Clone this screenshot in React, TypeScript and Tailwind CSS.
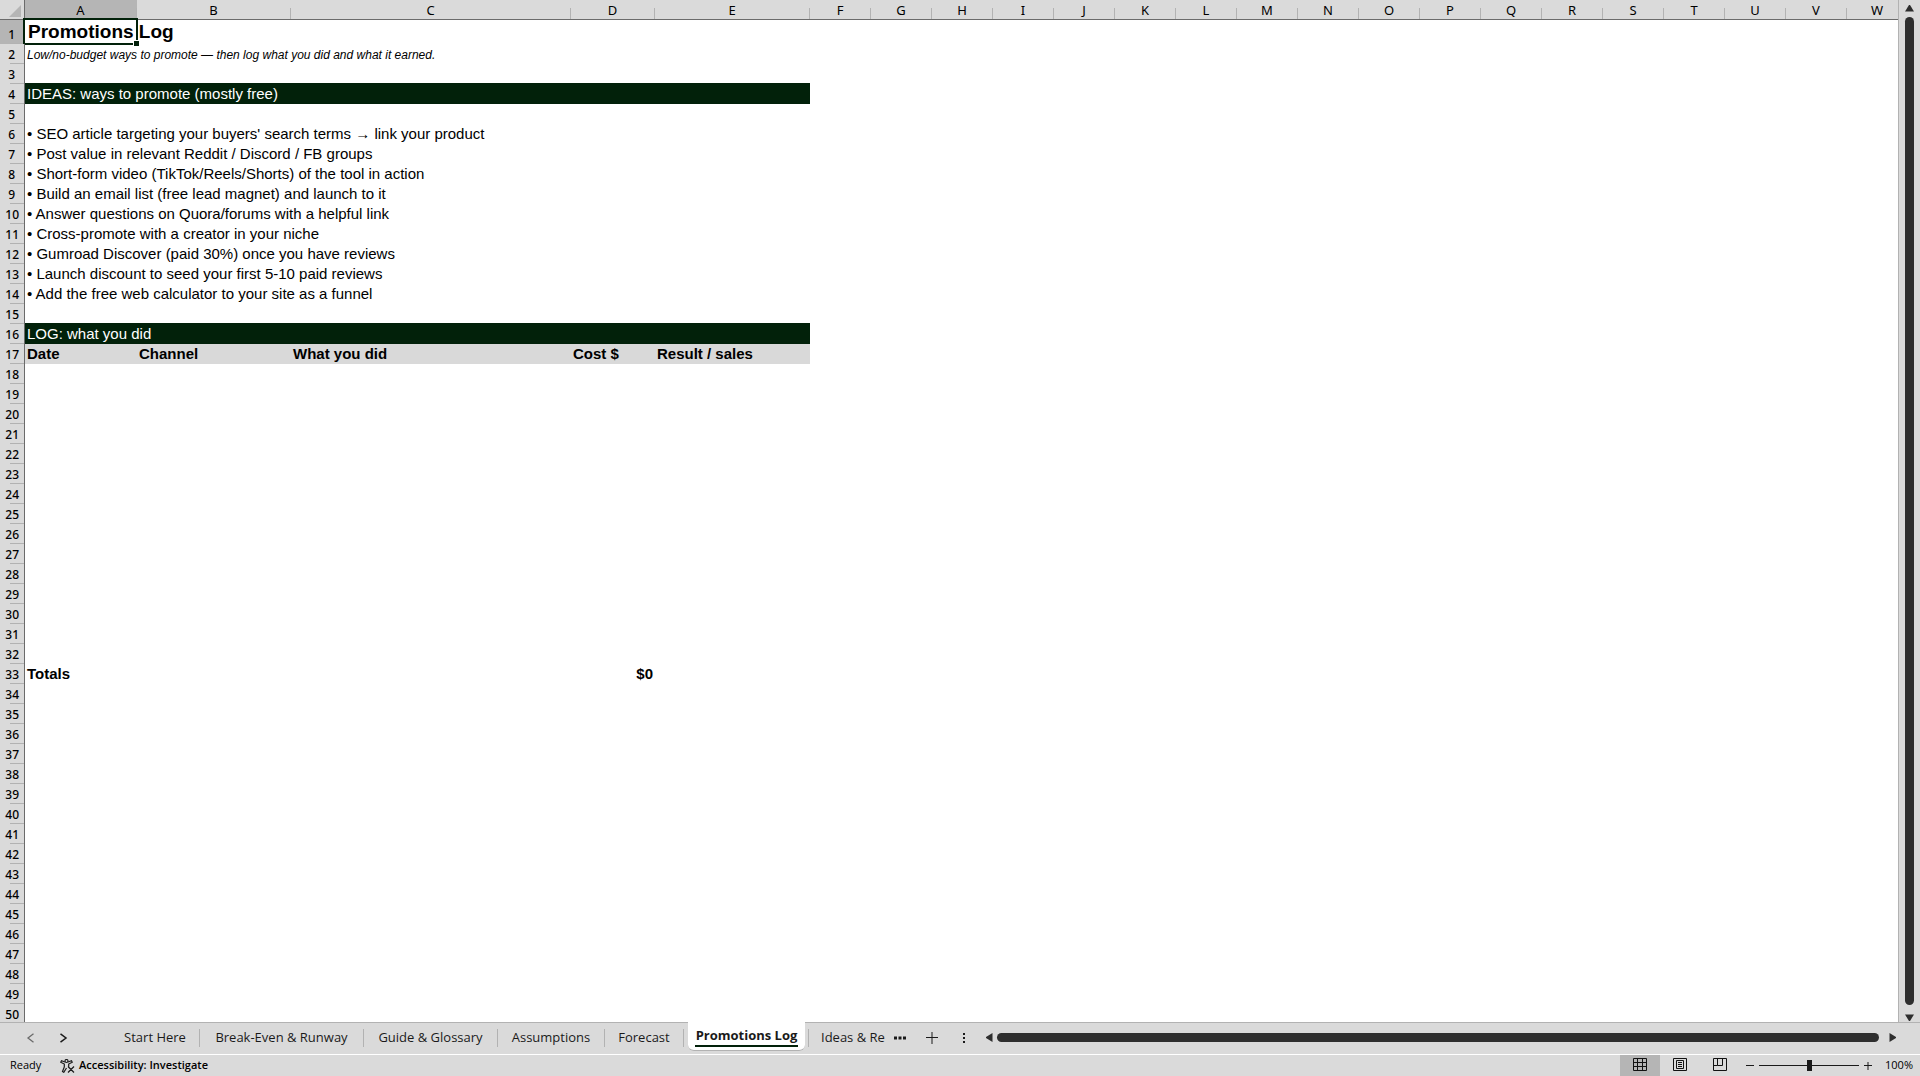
import type { ReactNode } from "react";

type Row = {
    cells?: Record<string, string>;
    band?: "dark" | "light";
    text?: string;
};

const COLUMNS = "ABCDEFGHIJKLMNOPQRSTUVW".split("");
const COLUMN_WIDTHS: Record<string, string> = {
    A: "w-[112px]",
    B: "w-[154px]",
    C: "w-[280px]",
    D: "w-[84px]",
    E: "w-[155px]",
};
const BAND_COLUMNS = ["A", "B", "C", "D", "E"];

const ROWS: Record<number, Row> = {
    2: {
        cells: { A: "Low/no-budget ways to promote — then log what you did and what it earned." },
        text: "text-[12px] leading-[22px] italic text-black",
    },
    4: {
        cells: { A: "IDEAS: ways to promote (mostly free)" },
        band: "dark",
        text: "text-[15px] leading-5 text-white",
    },
    6: { cells: { A: "• SEO article targeting your buyers' search terms → link your product" } },
    7: { cells: { A: "• Post value in relevant Reddit / Discord / FB groups" } },
    8: { cells: { A: "• Short-form video (TikTok/Reels/Shorts) of the tool in action" } },
    9: { cells: { A: "• Build an email list (free lead magnet) and launch to it" } },
    10: { cells: { A: "• Answer questions on Quora/forums with a helpful link" } },
    11: { cells: { A: "• Cross-promote with a creator in your niche" } },
    12: { cells: { A: "• Gumroad Discover (paid 30%) once you have reviews" } },
    13: { cells: { A: "• Launch discount to seed your first 5-10 paid reviews" } },
    14: { cells: { A: "• Add the free web calculator to your site as a funnel" } },
    16: {
        cells: { A: "LOG: what you did" },
        band: "dark",
        text: "text-[15px] leading-5 text-white",
    },
    17: {
        cells: { A: "Date", B: "Channel", C: "What you did", D: "Cost $", E: "Result / sales" },
        band: "light",
        text: "text-[15px] leading-5 font-bold",
    },
    33: { cells: { A: "Totals", D: "$0" }, text: "text-[15px] leading-5 font-bold" },
};

const TABS = [
    { name: "Start Here", width: "w-[89px]" },
    { name: "Break-Even & Runway", width: "w-[164px]" },
    { name: "Guide & Glossary", width: "w-[134px]" },
    { name: "Assumptions", width: "w-[107px]" },
    { name: "Forecast", width: "w-[79px]" },
];

function cellClass(row: number, col: string) {
    const inBand = BAND_COLUMNS.includes(col);
    const band = inBand ? ROWS[row]?.band : undefined;
    const bandBelow = inBand && ROWS[row + 1]?.band === "dark";
    let bg = "";
    if (band === "dark") bg = "bg-[#02210a]";
    if (band === "light") bg = "bg-[#d9d9d9]";
    let border = "";
    if (bandBelow) border = "border-b border-[#02210a]";
    const align = row === 33 && col === "D" ? "text-right" : "text-left";
    return `p-0 ${bg} ${border} ${align}`;
}

function Grid() {
    return (
        <table className="w-px table-fixed border-separate border-spacing-0 font-['Liberation_Sans',Arial,sans-serif] text-black">
            <colgroup>
                <col className="w-[25px]" />
                {COLUMNS.map((col) => (
                    <col key={col} className={COLUMN_WIDTHS[col] ?? "w-[61px]"} />
                ))}
            </colgroup>
            <thead className="font-['Noto_Sans',sans-serif] text-[13px] leading-4">
                <tr className="h-5">
                    <th className="border-b border-r border-[#6b6b6b] bg-[#dadada] p-0">
                        <svg className="ml-[9px] mt-[3px] h-3 w-3" viewBox="0 0 12 12" aria-label="Select all">
                            <path d="M12 0v12H0z" fill="#b5b5b5" />
                        </svg>
                    </th>
                    {COLUMNS.map((col) => (
                        <th
                            key={col}
                            className={`relative border-b border-[#6b6b6b] p-0 pr-px text-center font-normal ${
                                col === "A" ? "bg-[#b5b5b5]" : "bg-[#dadada]"
                            }`}
                        >
                            {col}
                            <span className="absolute right-0 bottom-0 h-[11px] w-px bg-[#b2b2b2]" />
                        </th>
                    ))}
                </tr>
            </thead>
            <tbody>
                {Array.from({ length: 50 }, (_, i) => i + 1).map((row) => (
                    <tr key={row} className={row === 1 ? "h-6" : "h-5"}>
                        <th
                            className={`relative border-r border-[#6b6b6b] p-0 pr-[5px] text-right align-bottom font-['Noto_Sans',sans-serif] text-[12px] leading-[18px] font-medium ${
                                row === 1 ? "bg-[#b5b5b5]" : "bg-[#dadada]"
                            }`}
                        >
                            <span className={row < 10 ? "pr-1" : ""}>{row}</span>
                            <span className="absolute right-0 bottom-0 h-px w-3.5 bg-[#b2b2b2]" />
                        </th>
                        {COLUMNS.map((col) => (
                            <td key={col} className={cellClass(row, col)}>
                                {row === 1 && col === "A" ? (
                                    <div className="relative h-6 pl-[3px] text-[19px] leading-6 font-bold whitespace-nowrap">
                                        Promotions Log
                                        <span className="absolute -top-0.5 -right-px -bottom-px -left-0.5 border-2 border-[#02210a]" />
                                        <span className="absolute -right-0.5 -bottom-0.5 h-[6px] w-[6px] border-t border-l border-white bg-[#02210a]" />
                                    </div>
                                ) : (
                                    ROWS[row]?.cells?.[col] && (
                                        <div
                                            className={`h-5 px-0.5 whitespace-nowrap ${
                                                ROWS[row].text ?? "text-[15px] leading-5"
                                            }`}
                                        >
                                            {ROWS[row].cells[col]}
                                        </div>
                                    )
                                )}
                            </td>
                        ))}
                    </tr>
                ))}
            </tbody>
        </table>
    );
}

function Arrow({ d, label }: { d: string; label: string }) {
    return (
        <button aria-label={label} className="shrink-0">
            <svg className="h-[9px] w-[9px]" viewBox="0 0 9 9" fill="#2e2e2e">
                <path d={d} />
            </svg>
        </button>
    );
}

function VerticalScrollbar() {
    return (
        <div className="flex w-[22px] shrink-0 flex-col items-center border-l border-[#b2b2b2] pt-1">
            <Arrow label="Scroll up" d="M4 1h1l4 6.500H0z" />
            <div className="mt-1 mb-2 w-[9px] flex-1 rounded-full bg-[#2e2e2e]" />
            <Arrow label="Scroll down" d="M4 8h1l4-6.500H0z" />
        </div>
    );
}

function SheetTabs() {
    return (
        <div className="flex h-8 shrink-0 items-center font-['Open_Sans','Noto_Sans',sans-serif] text-[13px] text-[#1a1a1a]">
            <div className="flex h-full w-[111px] items-center border-t border-[#b2b2b2] pb-0.5 pl-[26px]">
                <button aria-label="Previous sheet">
                    <svg className="h-2.5 w-2.5" viewBox="0 0 10 10" fill="none" stroke="#6b6b6b" strokeWidth="1.3">
                        <path d="M7.5.8 2 5l5.500 4.200" />
                    </svg>
                </button>
                <button aria-label="Next sheet" className="ml-[22px]">
                    <svg className="h-2.5 w-2.5" viewBox="0 0 10 10" fill="none" stroke="#1a1a1a" strokeWidth="1.5">
                        <path d="M2.500.8 8 5 2.500 9.200" />
                    </svg>
                </button>
            </div>
            {TABS.map((tab) => (
                <div key={tab.name} className={`flex h-full items-center border-t border-[#b2b2b2] pb-px ${tab.width}`}>
                    <button className="flex-1 font-medium whitespace-nowrap">{tab.name}</button>
                    <span className="h-[18px] w-px bg-[#b2b2b2]" />
                </div>
            ))}
            <div className="h-full w-1 border-t border-[#b2b2b2]" />
            <button className="h-[29px] w-[117px] self-start rounded-b-md border-b border-[#b2b2b2] bg-white font-bold whitespace-nowrap">
                <span className="mx-[7px] block border-b-2 border-[#02210a] leading-5">Promotions Log</span>
            </button>
            <div className="flex h-full flex-1 items-center border-t border-[#b2b2b2] pb-0.5">
                <span className="ml-[3px] h-[18px] w-px bg-[#b2b2b2]" />
                <button className="ml-3 w-16 overflow-hidden text-left font-medium whitespace-nowrap">
                    Ideas &amp; Research
                </button>
                <button aria-label="More sheets" className="ml-[9px]">
                    <svg className="h-3 w-3" viewBox="0 0 12 12" fill="#1a1a1a">
                        <path d="M0 4.500h3v3H0zM4.500 4.500h3v3h-3zM9 4.500h3v3H9z" />
                    </svg>
                </button>
                <button aria-label="New sheet" className="ml-5">
                    <svg className="h-3 w-3" viewBox="0 0 12 12" stroke="#1a1a1a" strokeWidth="1">
                        <path d="M6 0v12M0 5.500h12" />
                    </svg>
                </button>
                <span className="ml-[25px] flex flex-col gap-0.5">
                    <i className="h-0.5 w-0.5 bg-[#1a1a1a]" />
                    <i className="h-0.5 w-0.5 bg-[#1a1a1a]" />
                    <i className="h-0.5 w-0.5 bg-[#1a1a1a]" />
                </span>
                <div className="ml-5 flex flex-1 items-center pr-[23px]">
                    <Arrow label="Scroll left" d="M1 4v1l6.500 4V0z" />
                    <div className="mr-[9px] ml-[3px] h-[9px] flex-1 rounded-full bg-[#2e2e2e]" />
                    <Arrow label="Scroll right" d="M8 4v1L1.500 9V0z" />
                </div>
            </div>
        </div>
    );
}

function ViewButton({ label, active, children }: { label: string; active?: boolean; children: ReactNode }) {
    return (
        <button
            aria-label={label}
            className={`flex h-full w-10 items-center justify-center pb-0.5 ${active ? "bg-[#b5b5b5]" : ""}`}
        >
            <svg className="h-[13px] w-3.5" viewBox="0 0 14 13" fill="none" stroke="#111" strokeWidth="1">
                {children}
            </svg>
        </button>
    );
}

function StatusBar() {
    return (
        <div className="flex h-[22px] shrink-0 items-center border-t border-white font-['Open_Sans','Noto_Sans',sans-serif] text-[11px] text-black">
            <span className="ml-2.5 w-[31px] font-medium">Ready</span>
            <button className="ml-[19px] flex items-center gap-1 font-semibold">
                <svg className="h-3.5 w-[15px]" viewBox="0 0 15 14" fill="none" stroke="#1a1a1a" strokeWidth="1.200">
                    <circle cx="6.500" cy="2" r="1.500" />
                    <path d="M5 3 1.500 1.800.8 3.200 4.300 5v3L2.500 12.500l1.300.8L6.500 9M8 3l3.500-1.200.7 1.400L8.700 5v2.500M8 7.500l6 6M14 7.500l-6 6" />
                </svg>
                Accessibility: Investigate
            </button>
            <div className="flex-1" />
            <ViewButton label="Normal view" active>
                <path d="M.5.5h13v12H.5zM.5 4.500h13M.5 8.500h13M4.500.5v12M9.500.5v12" />
            </ViewButton>
            <ViewButton label="Page layout">
                <path d="M.5.5h13v12H.5zM3.500 2.500h7v8h-7zM5 4.500h4M5 6.500h4M5 8.500h4" />
            </ViewButton>
            <ViewButton label="Page break preview">
                <path d="M.5.5h13v12H.5zM4.500.5v7h5v-7M.5 7.500h4" />
            </ViewButton>
            <button aria-label="Zoom out" className="ml-[6px]">
                <svg className="h-2 w-2" viewBox="0 0 8 8" stroke="#1a1a1a">
                    <path d="M0 3.500h8" />
                </svg>
            </button>
            <input
                type="range"
                aria-label="Zoom"
                min={0}
                max={100}
                defaultValue={50}
                className="mx-[5px] h-3 w-[100px] appearance-none bg-[linear-gradient(#1a1a1a,#1a1a1a)] bg-[length:100%_1px] bg-center bg-no-repeat [&::-webkit-slider-thumb]:h-[11px] [&::-webkit-slider-thumb]:w-[5px] [&::-webkit-slider-thumb]:appearance-none [&::-webkit-slider-thumb]:bg-[#1a1a1a]"
            />
            <button aria-label="Zoom in">
                <svg className="h-2 w-2" viewBox="0 0 8 8" stroke="#1a1a1a">
                    <path d="M0 3.500h8M4 0v8" />
                </svg>
            </button>
            <span className="mr-[7px] w-[41px] text-right font-medium">100%</span>
        </div>
    );
}

export default function App() {
    return (
        <div className="flex h-screen flex-col overflow-hidden bg-[#dadada]">
            <div className="flex min-h-0 flex-1">
                <div className="min-w-0 flex-1 overflow-hidden bg-white">
                    <Grid />
                </div>
                <VerticalScrollbar />
            </div>
            <SheetTabs />
            <StatusBar />
        </div>
    );
}
